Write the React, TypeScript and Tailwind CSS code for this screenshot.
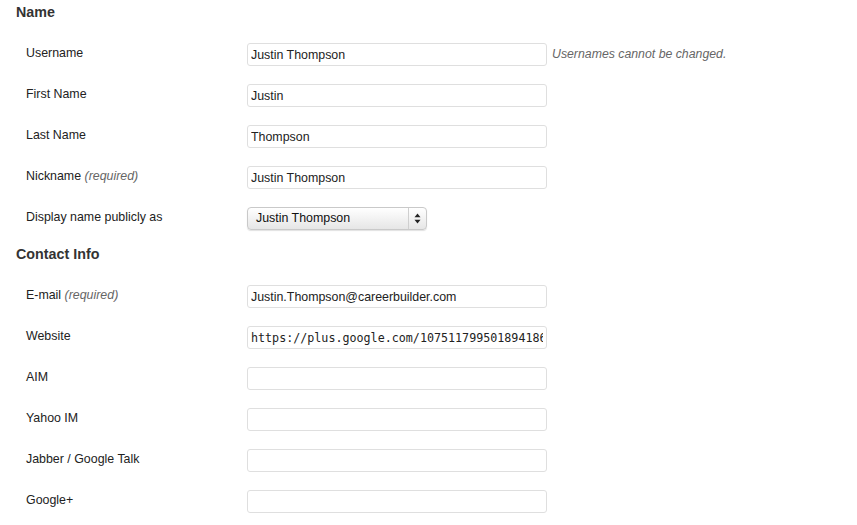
import React from 'react';

type Row = {
  label: string;
  required?: boolean;
  value?: string;
  mono?: boolean;
  note?: string;
  select?: boolean;
};

const NAME_ROWS: Row[] = [
  { label: 'Username', value: 'Justin Thompson', note: 'Usernames cannot be changed.' },
  { label: 'First Name', value: 'Justin' },
  { label: 'Last Name', value: 'Thompson' },
  { label: 'Nickname', required: true, value: 'Justin Thompson' },
  { label: 'Display name publicly as', value: 'Justin Thompson', select: true },
];

const CONTACT_ROWS: Row[] = [
  { label: 'E-mail', required: true, value: 'Justin.Thompson@careerbuilder.com' },
  { label: 'Website', value: 'https://plus.google.com/107511799501894186', mono: true },
  { label: 'AIM' },
  { label: 'Yahoo IM' },
  { label: 'Jabber / Google Talk' },
  { label: 'Google+' },
];

function SelectBox({ value }: { value: string }) {
  return (
    <div className="flex h-[23px] w-[180px] overflow-hidden rounded-[4px] border border-[#c9c9c9] bg-gradient-to-b from-white to-[#e6e6e6] shadow-[0_1px_1px_rgba(0,0,0,0.12)]">
      <div className="flex-1 pl-[8px] text-[12.4px] leading-[21px] text-[#111]">{value}</div>
      <div className="flex w-[18px] items-center justify-center border-l border-[#cfcfcf]">
        <svg width="7" height="11" viewBox="0 0 7 11">
          <path d="M3.5 0.5 L6.5 4.2 L0.5 4.2 Z" fill="#222" />
          <path d="M3.5 10.5 L6.5 6.8 L0.5 6.8 Z" fill="#222" />
        </svg>
      </div>
    </div>
  );
}

function FieldRow({ row }: { row: Row }) {
  return (
    <div className="flex h-[41px]">
      <div className="w-[221px] pt-[9px] text-[12.4px] leading-[18px] text-[#222]">
        {row.label}
        {row.required && <span className="italic text-[#666]"> (required)</span>}
      </div>
      <div className="flex items-start gap-[5px] pt-[8px]">
        {row.select ? (
          <SelectBox value={row.value ?? ''} />
        ) : (
          <input
            readOnly
            value={row.value ?? ''}
            className={
              'box-border h-[23px] w-[300px] rounded-[3px] border border-[#dfdfdf] bg-white px-[3px] text-[#222] outline-none ' +
              (row.mono
                ? "font-['DejaVu_Sans_Mono',monospace] text-[11.7px]"
                : 'text-[12.4px]')
            }
          />
        )}
        {row.note && (
          <span className="pt-[2px] text-[12.3px] italic leading-[18px] text-[#666]">{row.note}</span>
        )}
      </div>
    </div>
  );
}

function Section({ title, rows, first }: { title: string; rows: Row[]; first?: boolean }) {
  return (
    <div>
      <h3
        className={
          'pb-[13px] text-[14.3px] font-bold leading-[20px] text-[#333] ' + (first ? 'pt-[2px]' : 'pt-[4px]')
        }
      >
        {title}
      </h3>
      <div className="pl-[10px]">
        {rows.map((r) => (
          <FieldRow key={r.label} row={r} />
        ))}
      </div>
    </div>
  );
}

export default function App() {
  return (
    <div className="min-h-screen bg-white pl-[16px] font-['Liberation_Sans',Arial,sans-serif]">
      <Section title="Name" rows={NAME_ROWS} first />
      <Section title="Contact Info" rows={CONTACT_ROWS} />
    </div>
  );
}
